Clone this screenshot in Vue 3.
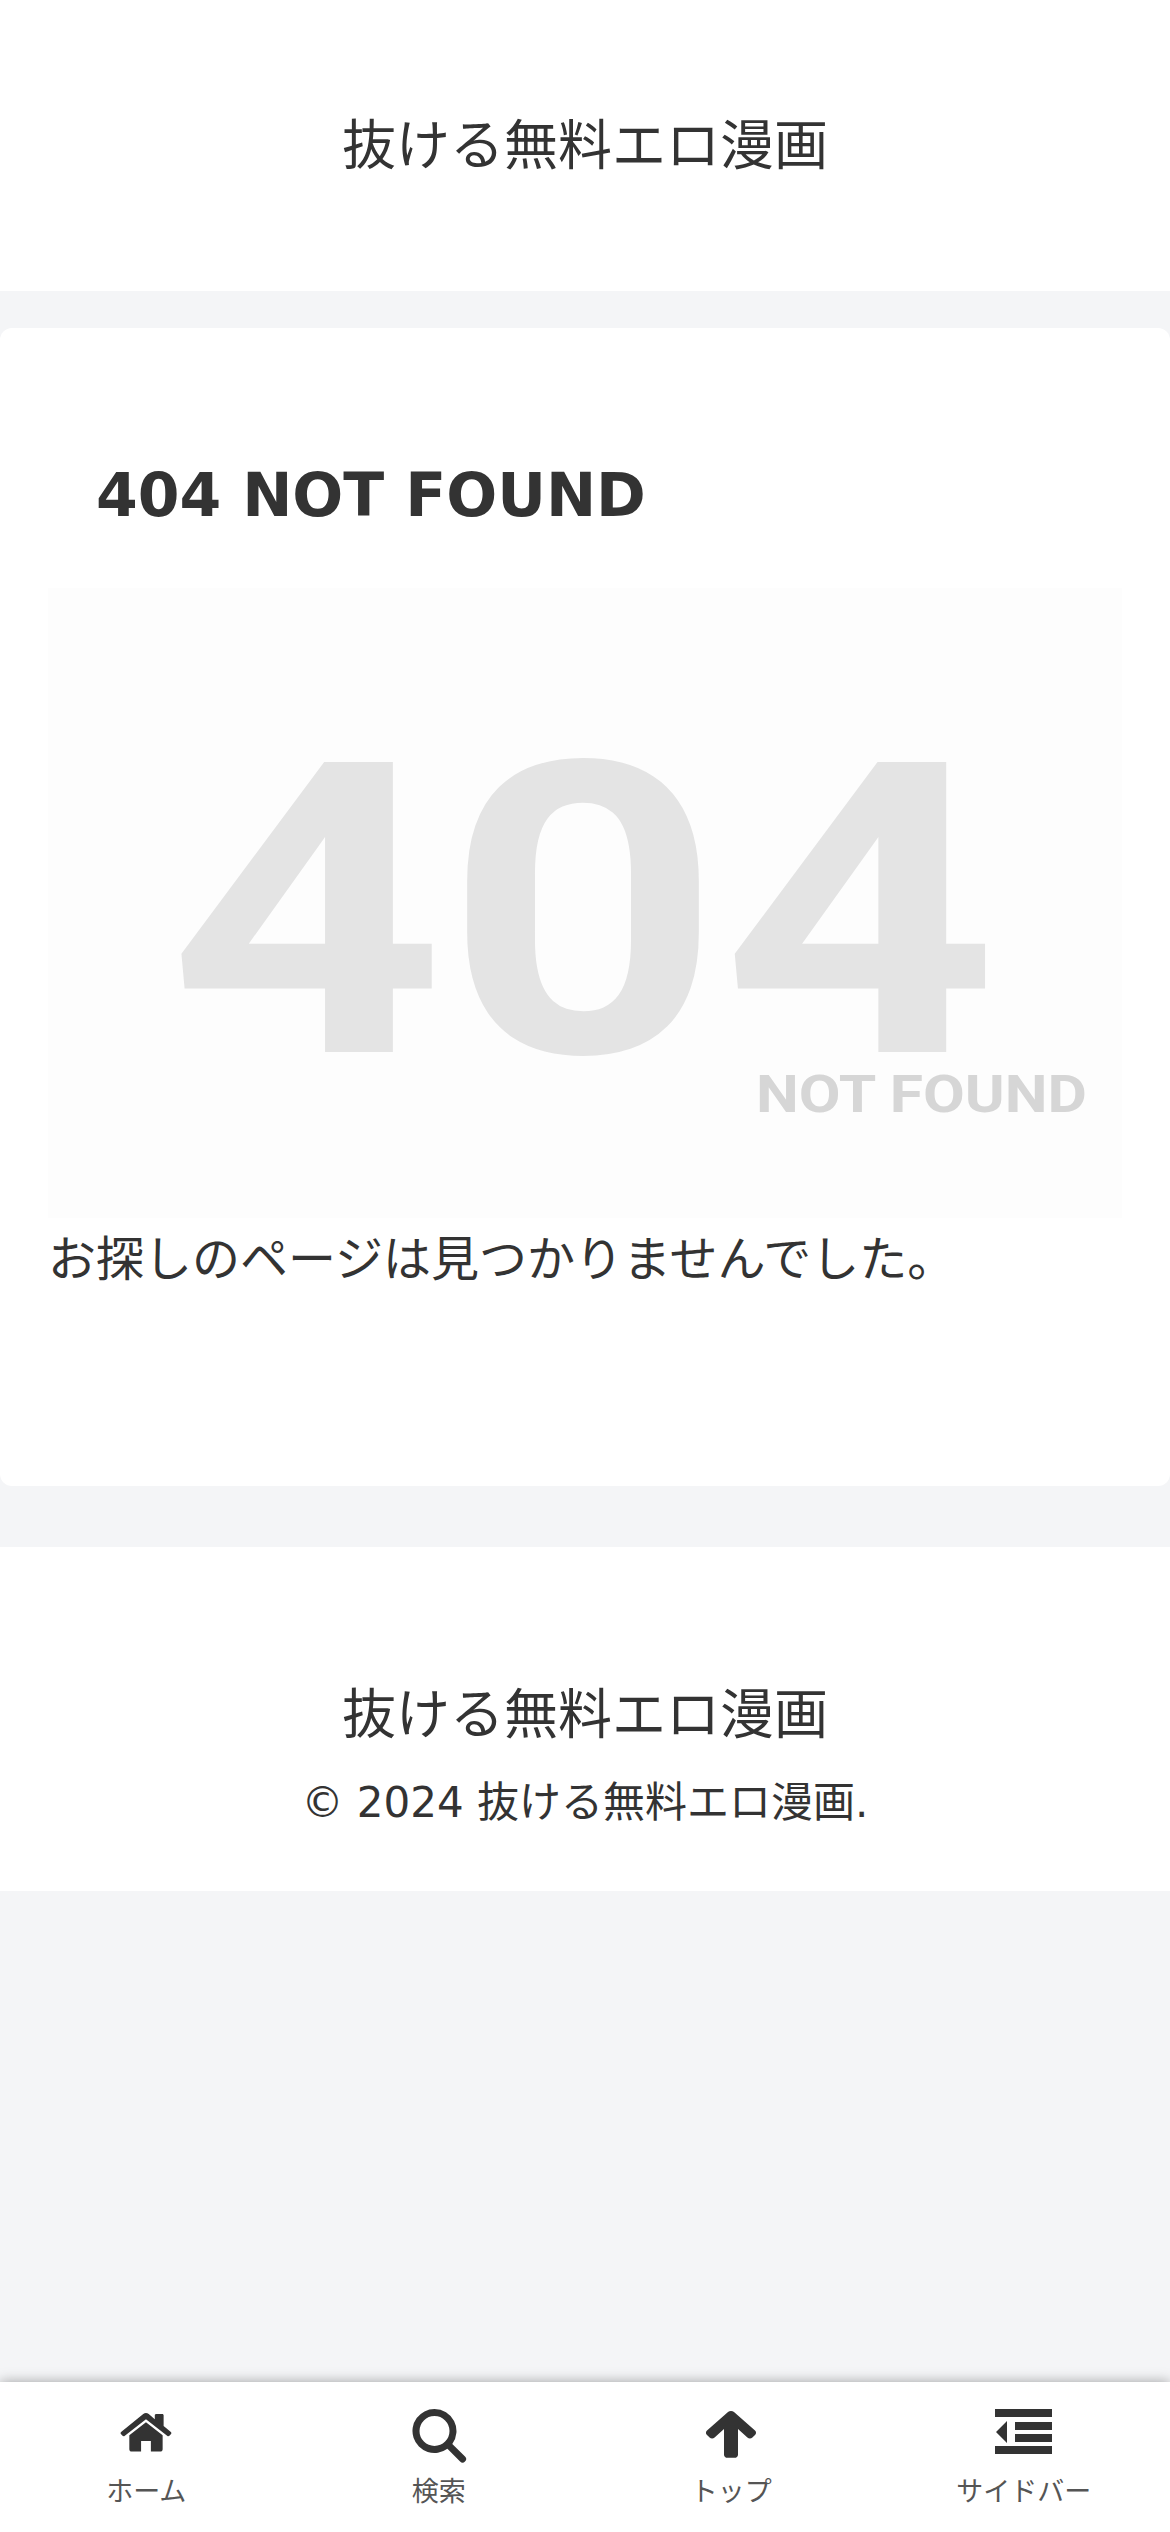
<script setup>
const menu = [
  { label: "ホーム", icon: "home" },
  { label: "検索", icon: "search" },
  { label: "トップ", icon: "up" },
  { label: "サイドバー", icon: "side" },
];
</script>

<template>
  <div class="page">
    <header class="header">
      <div class="site-name">抜ける無料エロ漫画</div>
    </header>

    <main class="card">
      <h1 class="title">404 NOT FOUND</h1>
      <div class="picture">
        <svg viewBox="0 0 1074 630" width="1074" height="630">
          <text class="big" x="120" y="464" textLength="830" lengthAdjust="spacingAndGlyphs">404</text>
          <text class="small" x="708" y="524" textLength="331" lengthAdjust="spacingAndGlyphs">NOT FOUND</text>
        </svg>
      </div>
      <p class="message">お探しのページは見つかりませんでした。</p>
    </main>

    <footer class="footer">
      <div class="site-name">抜ける無料エロ漫画</div>
      <div class="copy">© 2024 抜ける無料エロ漫画.</div>
    </footer>

    <nav class="bar">
      <div v-for="item in menu" :key="item.label" class="bar-item">
        <svg class="icon" viewBox="0 0 58 54" width="58" height="54">
          <g v-if="item.icon === 'home'" transform="translate(3.5 4) scale(0.98 0.93)">
            <path d="M26 10 9 24v15c0 1.500 1 2.500 2.500 2.500H21V30h10v11.500h9.500c1.500 0 2.500-1 2.500-2.500V24L26 10z" />
            <path d="M26 0c-1 0-2 .4-2.800 1L.6 20.500c-.6.500-.7 1.400-.2 2l1.700 2c.5.600 1.400.7 2 .2L26 6.600l21.900 18.100c.6.500 1.500.4 2-.2l1.700-2c.5-.6.400-1.500-.2-2L44 14V2.500c0-.8-.6-1.500-1.500-1.500h-6c-.8 0-1.500.7-1.500 1.500v4.200l-6.200-5.700C28 .4 27 0 26 0z" />
          </g>
          <path
            v-else-if="item.icon === 'search'"
            transform="translate(2.500 0)"
            fill-rule="evenodd"
            d="M22 0a22 22 0 0 1 17.800 34.900l12.700 12.700a3.400 3.400 0 0 1 0 4.900 3.400 3.400 0 0 1-4.900 0L34.900 39.800A22 22 0 1 1 22 0zm0 7a15 15 0 1 0 0 30 15 15 0 0 0 0-30z"
          />
          <path
            v-else-if="item.icon === 'up'"
            transform="translate(4 2) scale(1 0.9)"
            d="M25 0c1.100 0 2.200.4 3 1.200l21 20.600c1.400 1.400 1.400 3.700 0 5l-2.600 2.600c-1.400 1.400-3.600 1.400-5 0L32 20v28.500c0 1.900-1.600 3.500-3.500 3.500h-7c-1.900 0-3.500-1.600-3.500-3.500V20l-9.400 9.400c-1.400 1.400-3.600 1.400-5 0L1 26.800c-1.400-1.300-1.400-3.600 0-5L22 1.200C22.800.4 23.900 0 25 0z"
          />
          <path
            v-else
            d="M0 0h57v8H0zM20 13h37v8H20zM20 25h37v8H20zM0 37h57v8H0zM12 12v22L1 23z"
          />
        </svg>
        <span class="label">{{ item.label }}</span>
      </div>
    </nav>
  </div>
</template>

<style>
html,
body {
  margin: 0;
  background: #f4f5f7;
}
</style>

<style scoped>
.page {
  height: 2532px;
  overflow: hidden;
  position: relative;
  display: flex;
  flex-direction: column;
  background: #f4f5f7;
  color: #333;
  font-family: "DejaVu Sans", "Noto Sans CJK JP", sans-serif;
}

.header {
  height: 291px;
  flex-shrink: 0;
  background: #fff;
  display: flex;
  justify-content: center;
  padding-top: 109px;
  box-sizing: border-box;
}

.site-name {
  font-size: 54px;
  line-height: 76px;
  text-align: center;
}

.card {
  height: 1158px;
  flex-shrink: 0;
  box-sizing: border-box;
  margin-top: 37px;
  padding: 0 48px;
  background: #fff;
  border-radius: 12px;
  overflow: hidden;
}

.title {
  margin: 0;
  padding: 123px 0 0 48px;
  font-size: 60px;
  line-height: 88px;
  font-weight: 700;
}

.picture {
  height: 630px;
  margin-top: 49px;
  background: #fdfdfd;
}

.picture svg {
  display: block;
}

.big {
  font-family: Roboto, sans-serif;
  font-size: 408px;
  font-weight: 700;
  fill: #e4e4e4;
}

.small {
  font-family: Roboto, sans-serif;
  font-size: 52px;
  font-weight: 700;
  fill: #d6d6d6;
}

.message {
  margin: 3px 0 0;
  font-size: 48px;
  line-height: 76px;
}

.footer {
  height: 344px;
  flex-shrink: 0;
  box-sizing: border-box;
  margin-top: 61px;
  padding-top: 131px;
  background: #fff;
  text-align: center;
}

.copy {
  font-size: 42px;
  line-height: 60px;
  margin-top: 19px;
}

.bar {
  position: absolute;
  left: 0;
  right: 0;
  bottom: 0;
  height: 150px;
  display: grid;
  grid-template-columns: repeat(4, 1fr);
  background: #fff;
  box-shadow: 0 0 12px rgba(0, 0, 0, 0.35);
}

.bar-item {
  display: flex;
  flex-direction: column;
  align-items: center;
  padding-top: 27px;
}

.icon {
  fill: #333;
  display: block;
  margin-bottom: 10px;
}

.label {
  font-size: 27px;
  line-height: 38px;
  color: #555;
}
</style>
